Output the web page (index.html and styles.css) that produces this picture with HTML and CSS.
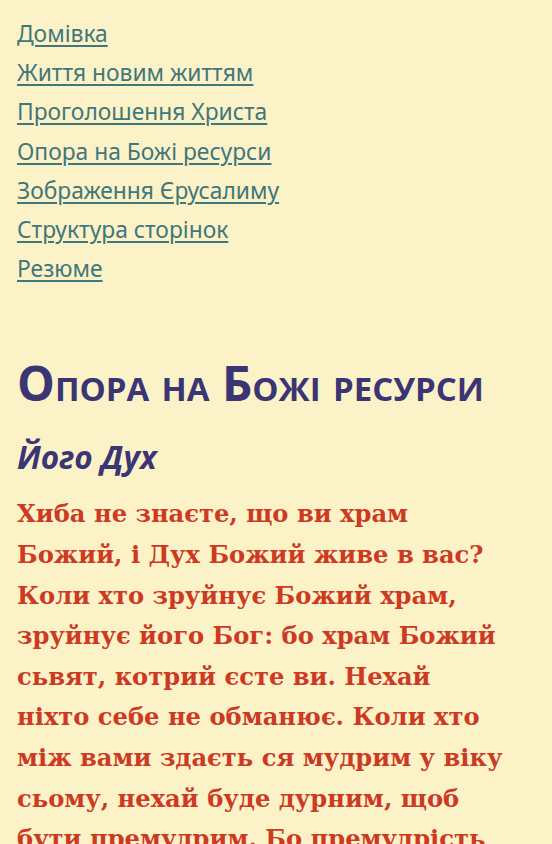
FILE: index.html
```html
<!DOCTYPE html>
<html lang="uk">
<head>
<meta charset="utf-8">
<title>Опора на Божі ресурси</title>
<link rel="stylesheet" href="styles.css">
</head>
<body>
<nav class="toc">
  <ul class="toc-list">
    <li><a href="#">Домівка</a></li>
    <li><a href="#">Життя новим життям</a></li>
    <li><a href="#">Проголошення Христа</a></li>
    <li><a href="#">Опора на Божі ресурси</a></li>
    <li><a href="#">Зображення Єрусалиму</a></li>
    <li><a href="#">Структура сторінок</a></li>
    <li><a href="#">Резюме</a></li>
  </ul>
</nav>
<main class="content">
  <h1 class="title">Опора на Божі ресурси</h1>
  <h2 class="subtitle">Його Дух</h2>
  <p class="verse">Хиба не знаєте, що ви храм Божий, і Дух Божий живе в вас? Коли хто зруйнує Божий храм, зруйнує його Бог: бо храм Божий сьвят, котрий єсте ви. Нехай ніхто себе не обманює. Коли хто між вами здаєть ся мудрим у віку сьому, нехай буде дурним, щоб бути премудрим. Бо премудрість сьвіту сього глупота перед Богом.</p>
</main>
</body>
</html>
```
FILE: styles.css
```css
html, body {
  margin: 0;
  padding: 0;
  background: #fcf2c8;
}
body {
  padding: 14px 17px 0 17px;
}
.toc-list {
  list-style: none;
  margin: 0;
  padding: 0;
}
.toc-list li {
  font-family: "Noto Sans", sans-serif;
  font-size: 22.8px;
  line-height: 39.2px;
}
.toc-list a {
  color: #40777a;
  text-decoration: underline;
  text-underline-offset: 3px;
  text-decoration-thickness: 2px;
}
.content {
  margin-top: 70px;
}
.title {
  font-family: "Open Sans", sans-serif;
  font-variant: small-caps;
  font-synthesis: small-caps;
  font-weight: 700;
  font-size: 47.6px;
  line-height: 50px;
  color: #3b3574;
  margin: 0 0 28px 0;
}
.subtitle {
  font-family: "Open Sans", sans-serif;
  font-style: italic;
  font-weight: 700;
  font-size: 31.5px;
  line-height: 42px;
  color: #3b3574;
  margin: 0 0 16px 0;
}
.verse {
  font-family: "DejaVu Serif", serif;
  font-weight: 700;
  font-size: 24.2px;
  line-height: 40.6px;
  color: #cc3a24;
  margin: 0;
  max-width: 490px;
}
```
